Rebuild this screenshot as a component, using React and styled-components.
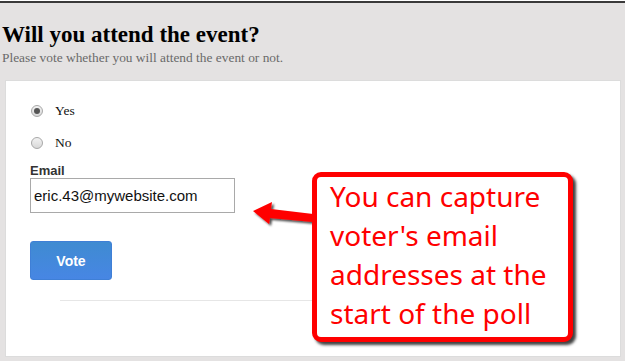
import styled, { createGlobalStyle } from "styled-components";

const GlobalStyle = createGlobalStyle`
    html, body {
        margin : 0;
        padding : 0;
        background : #ffffff;
    }
`;

const StyledPage = styled.div`
    position : relative;
    box-sizing : border-box;
    margin-top : 1px;
    height : 360px;
    background : #e4e2e2;
    border-top : 2px solid #3a3a3a;
    padding : 0 4px 4px 5px;
    display : flex;
    flex-direction : column;
    overflow : hidden;
`;

const StyledHeader = styled.div`
    padding : 19px 0 0 0;
    margin-left : -3px;
`;

const StyledTitle = styled.h1`
    margin : 0;
    font-family : "Liberation Serif", "Times New Roman", serif;
    font-size : 23px;
    line-height : 26px;
    font-weight : bold;
    color : #000;
`;

const StyledSub = styled.p`
    margin : 2px 0 0 0;
    font-family : "Liberation Serif", "Times New Roman", serif;
    font-size : 13.4px;
    line-height : 16px;
    color : #6a6a6a;
`;

const StyledCard = styled.div`
    box-sizing : border-box;
    flex : 1;
    margin-top : 14px;
    background : #ffffff;
    border : 1px solid #dcdcdc;
    padding : 20px 0 0 24px;
    display : flex;
    flex-direction : column;
    align-items : flex-start;
`;

const StyledOption = styled.label`
    display : flex;
    align-items : center;
    gap : 12px;
    height : 20px;
    margin : ${(p) => (p.$first ? "0" : "12px")} 0 0 1px;
    font-family : "Liberation Serif", "Times New Roman", serif;
    font-size : 13.5px;
    color : #111;
`;

const StyledRadio = styled.span`
    box-sizing : border-box;
    width : 12px;
    height : 12px;
    border-radius : 50%;
    border : 1px solid #a8a8a8;
    background : linear-gradient(#f2f2f2, #d8d8d8);
    display : flex;
    align-items : center;
    justify-content : center;
    &::after {
        content : "";
        display : ${(p) => (p.$checked ? "block" : "none")};
        width : 6px;
        height : 6px;
        border-radius : 50%;
        background : #555;
    }
`;

const StyledLabel = styled.div`
    margin-top : 10px;
    font-family : "Liberation Sans", Arial, sans-serif;
    font-size : 13px;
    line-height : 15px;
    font-weight : bold;
    color : #333;
`;

const StyledInput = styled.input`
    box-sizing : border-box;
    width : 205px;
    height : 35px;
    margin : 0;
    padding : 0 3px;
    border : 1px solid #a9a9a9;
    font-family : "Liberation Sans", Arial, sans-serif;
    font-size : 15px;
    color : #111;
    outline : none;
`;

const StyledButton = styled.button`
    box-sizing : border-box;
    width : 82px;
    height : 39px;
    margin-top : 28px;
    border : 1px solid #3f7fd6;
    border-radius : 3px;
    background : linear-gradient(#3f8bd1, #4786e4);
    color : #fff;
    font-family : "Liberation Sans", Arial, sans-serif;
    font-size : 14px;
    font-weight : bold;
`;

const StyledHr = styled.div`
    width : 500px;
    margin : 20px 0 0 30px;
    border-top : 1px solid #e6e6e6;
`;

const StyledCallout = styled.div`
    position : absolute;
    left : 312px;
    top : 169px;
    box-sizing : border-box;
    width : 261px;
    height : 170px;
    border : 5px solid #ff0000;
    border-radius : 9px;
    background : #fff;
    box-shadow : 3px 3px 3px rgba(0, 0, 0, 0.75);
    padding : 0 0 0 13px;
    font-family : "Noto Sans", "Open Sans", sans-serif;
    font-size : 28px;
    line-height : 39px;
    color : #ff0000;
    white-space : nowrap;
`;

const StyledArrow = styled.svg`
    position : absolute;
    left : 250px;
    top : 195px;
    overflow : visible;
`;

const App = () => {
    return (
        <>
            <GlobalStyle />
            <StyledPage>
                <StyledHeader>
                    <StyledTitle>Will you attend the event?</StyledTitle>
                    <StyledSub>Please vote whether you will attend the event or not.</StyledSub>
                </StyledHeader>
                <StyledCard>
                    <StyledOption $first>
                        <StyledRadio $checked />
                        Yes
                    </StyledOption>
                    <StyledOption>
                        <StyledRadio />
                        No
                    </StyledOption>
                    <StyledLabel>Email</StyledLabel>
                    <StyledInput type="text" defaultValue="eric.43@mywebsite.com" />
                    <StyledButton>Vote</StyledButton>
                    <StyledHr />
                </StyledCard>
                <StyledArrow width="70" height="30" viewBox="0 0 70 30">
                    <defs>
                        <filter id="sh" x="-20%" y="-50%" width="150%" height="200%">
                            <feDropShadow dx="2" dy="2" stdDeviation="1.2" floodColor="#000" floodOpacity="0.7" />
                        </filter>
                    </defs>
                    <path
                        d="M3 13 L22 4 L21 11 L63 16 L63 24 L20 20 L19 26 Z"
                        fill="#ff0000"
                        filter="url(#sh)"
                    />
                </StyledArrow>
                <StyledCallout>
                    You can capture<br />
                    voter's email<br />
                    addresses at the<br />
                    start of the poll
                </StyledCallout>
            </StyledPage>
        </>
    );
};

export default App;
